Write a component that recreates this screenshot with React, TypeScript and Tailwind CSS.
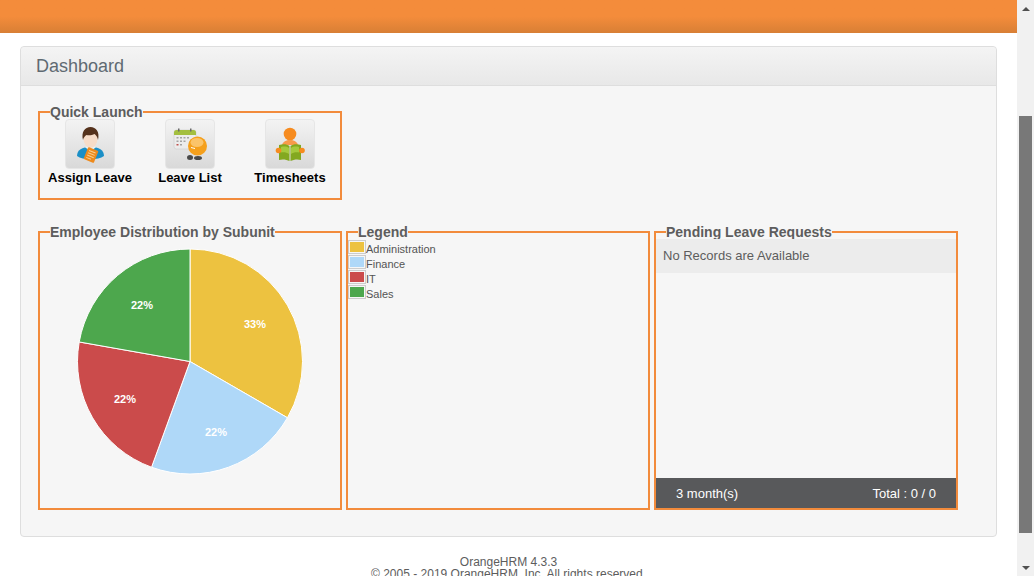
import type { ReactNode } from 'react'

const ORANGE = 'border-[#f28b3c]'

const LEGEND_ITEMS = [
  { label: 'Administration', swatch: 'bg-[#edc240]' },
  { label: 'Finance', swatch: 'bg-[#afd8f8]' },
  { label: 'IT', swatch: 'bg-[#cb4b4b]' },
  { label: 'Sales', swatch: 'bg-[#4da74d]' },
]

// start / end angle clockwise from 12 o'clock
const SLICES = [
  { from: 0, to: 120, color: '#edc240' },
  { from: 120, to: 200, color: '#afd8f8' },
  { from: 200, to: 280, color: '#cb4b4b' },
  { from: 280, to: 360, color: '#4da74d' },
]

const PIE_LABELS = [
  { x: 215, y: 88, text: '33%' },
  { x: 176, y: 196, text: '22%' },
  { x: 85, y: 163, text: '22%' },
  { x: 102, y: 69, text: '22%' },
]

function slicePath(from: number, to: number) {
  const cx = 150
  const cy = 121.5
  const r = 112.5
  const point = (deg: number) => {
    const rad = (deg * Math.PI) / 180
    return `${(cx + r * Math.sin(rad)).toFixed(2)} ${(cy - r * Math.cos(rad)).toFixed(2)}`
  }
  return `M${cx} ${cy} L${point(from)} A${r} ${r} 0 ${to - from > 180 ? 1 : 0} 1 ${point(to)} Z`
}

function Group({
  title,
  className,
  children,
}: {
  title: string
  className: string
  children: ReactNode
}) {
  return (
    <fieldset className={`border-2 ${ORANGE} ${className}`}>
      <legend className="ml-[10px] text-[14px] leading-[16px] font-bold text-[#5d5d5d]">{title}</legend>
      {children}
    </fieldset>
  )
}

function AssignIcon() {
  return (
    <svg width="48" height="48" viewBox="0 0 48 48">
      <path d="M11 36c0-6 5-9 13.500-9S38 30 38 36c-3 2.500-8 3-13.500 3S14 38.500 11 36z" fill="#1b8fc6" />
      <path d="M19 27l5.500 5 5.500-5-5.500-1.500z" fill="#e8f3f8" />
      <ellipse cx="24.500" cy="19" rx="7" ry="9" fill="#f7dcc8" />
      <path d="M17 20c-2-8 2-13 7.500-13S34 12 32 20c-.5-3-2-5-3.500-6-2.500 1.500-6 1.500-8 1-1.500 1-3 2.500-3.500 5z" fill="#55321c" />
      <g transform="rotate(22 25 35)">
        <rect x="19.500" y="28.500" width="11" height="13" rx="1" fill="#ee8a1c" />
        <path d="M21.500 31.500h7M21.500 34h7M21.500 36.500h7M21.500 39h5" stroke="#fbd08f" strokeWidth="1" />
      </g>
    </svg>
  )
}

function LeaveListIcon() {
  return (
    <svg width="48" height="48" viewBox="0 0 48 48">
      <rect x="8" y="10" width="22" height="19" rx="2.500" fill="#ececec" stroke="#c4c4c4" strokeWidth="0.5" />
      <path d="M8 15v-2.500A2.500 2.500 0 0 1 10.500 10h17a2.500 2.500 0 0 1 2.500 2.500V15z" fill="#a3bf3f" />
      <rect x="12" y="8.500" width="1.500" height="3" fill="#6b6b6b" />
      <rect x="24" y="8.500" width="1.500" height="3" fill="#6b6b6b" />
      <path
        d="M10.500 17h2v1.500h-2zM14 17h2v1.500h-2zM17.500 17h2v1.500h-2zM21 17h2v1.500h-2zM10.500 20.500h2V22h-2zM14 20.500h2V22h-2zM17.500 20.500h2V22h-2zM14 24h2v1.500h-2z"
        fill="#a3a3a3"
      />
      <rect x="10.500" y="24" width="2" height="1.500" fill="#c0504d" />
      <ellipse cx="24" cy="37.500" rx="3" ry="2.500" fill="#4a4a4a" />
      <ellipse cx="32" cy="38" rx="4" ry="2" fill="#4a4a4a" />
      <circle cx="31.500" cy="26" r="9.500" fill="#f5a01c" />
      <ellipse cx="31" cy="22.500" rx="6.500" ry="4.500" fill="#fbc46a" />
      <path d="M25 27.500l4 1" stroke="#fff" strokeWidth="1" />
    </svg>
  )
}

function TimesheetsIcon() {
  return (
    <svg width="48" height="48" viewBox="0 0 48 48">
      <circle cx="24" cy="14" r="6.300" fill="#f68b1f" />
      <path d="M16 25c1-3.500 4-5 8-5s7 1.500 8 5z" fill="#f79a4a" />
      <path d="M13 25c4-1.500 8-1 10.500 1v15c-3-1.500-7-2-10.500-1z" fill="#83a820" />
      <path d="M35 25c-4-1.500-8-1-10.500 1v15c3-1.500 7-2 10.500-1z" fill="#83a820" />
      <path d="M15 27c3-.7 6-.5 8 1v6c-2-1.500-5-2-8-1.500zM33 27c-3-.7-6-.5-8 1v6c2-1.500 5-2 8-1.500z" fill="#a5c93d" />
      <circle cx="12.500" cy="30.500" r="2.800" fill="#f68b1f" />
      <circle cx="36" cy="30.500" r="2.800" fill="#f68b1f" />
    </svg>
  )
}

function QuickItem({ label, icon }: { label: string; icon: ReactNode }) {
  return (
    <div className="flex w-[100px] flex-col items-center">
      <div className="flex h-[50px] w-[50px] items-center justify-center rounded-[4px] border border-[#e6e6e6] bg-gradient-to-b from-[#f3f3f3] to-[#d9d9d9]">
        {icon}
      </div>
      <span className="mt-[1px] text-[13px] leading-[16px] font-bold whitespace-nowrap text-black">{label}</span>
    </div>
  )
}

function PieChart() {
  return (
    <svg width="300" height="262" viewBox="0 0 300 262" className="block">
      {SLICES.map((s) => (
        <path key={s.from} d={slicePath(s.from, s.to)} fill={s.color} stroke="#fff" strokeWidth="1" />
      ))}
      {PIE_LABELS.map((l) => (
        <text
          key={`${l.x}-${l.y}`}
          x={l.x}
          y={l.y}
          textAnchor="middle"
          fill="#fff"
          fontSize="11"
          fontWeight="700"
        >
          {l.text}
        </text>
      ))}
    </svg>
  )
}

function Scrollbar() {
  return (
    <div className="flex h-full w-[17px] shrink-0 flex-col items-center bg-[#f1f1f1]">
      <div className="flex h-[17px] w-full items-center justify-center">
        <div className="h-0 w-0 border-x-[4px] border-b-[4px] border-x-transparent border-b-[#505050]" />
      </div>
      <div className="mt-[99px] h-[417px] w-[13px] bg-[#787878]" />
      <div className="mt-auto flex h-[17px] w-full items-center justify-center">
        <div className="h-0 w-0 border-x-[4px] border-t-[4px] border-x-transparent border-t-[#505050]" />
      </div>
    </div>
  )
}

export default function App() {
  return (
    <div className="flex h-[576px] w-[1034px] overflow-hidden bg-white font-['Liberation_Sans',Arial,sans-serif]">
      <div className="w-[1017px] shrink-0">
        <div className="h-[33px] bg-gradient-to-b from-[#f48c3b] from-50% to-[#d87f35]" />

        <div className="mx-[20px] mt-[13px] h-[491px] rounded-[4px] border border-[#dedede] bg-[#f6f6f6]">
          <div className="flex h-[39px] items-center rounded-t-[4px] border-b border-[#dedede] bg-gradient-to-b from-[#f4f4f4] to-[#e8e8e8] pl-[15px]">
            <h1 className="text-[18px] font-normal text-[#5f6a72]">Dashboard</h1>
          </div>

          <div className="pt-[18px] pl-[17px]">
            <Group title="Quick Launch" className="h-[96px] w-[304px]">
              <div className="-mt-[1px] flex">
                <QuickItem label="Assign Leave" icon={<AssignIcon />} />
                <QuickItem label="Leave List" icon={<LeaveListIcon />} />
                <QuickItem label="Timesheets" icon={<TimesheetsIcon />} />
              </div>
            </Group>

            <div className="mt-[24px] flex gap-[4px]">
              <Group title="Employee Distribution by Subunit" className="h-[286px] w-[304px]">
                <PieChart />
              </Group>

              <Group title="Legend" className="h-[286px] w-[304px]">
                <ul>
                  {LEGEND_ITEMS.map((item) => (
                    <li key={item.label} className="flex h-[15px] text-[11px] leading-[19px] text-[#545454]">
                      <span className="h-[14px] w-[18px] border border-[#ccc] p-[1px]">
                        <span className={`block h-[10px] w-[14px] ${item.swatch}`} />
                      </span>
                      {item.label}
                    </li>
                  ))}
                </ul>
              </Group>

              <Group title="Pending Leave Requests" className="h-[286px] w-[304px]">
                <div className="-mt-[1px] flex h-[269px] flex-col">
                  <div className="flex h-[34px] items-center bg-[#ececec] pl-[7px] text-[13px] text-[#5d5d5d]">
                    No Records are Available
                  </div>
                  <div className="mt-auto flex h-[30px] items-center justify-between bg-[#58595b] px-[20px] pt-[2px] text-[13px] text-white">
                    <span>3 month(s)</span>
                    <span>Total : 0 / 0</span>
                  </div>
                </div>
              </Group>
            </div>
          </div>
        </div>

        <div className="mt-[19px] text-center text-[12px] leading-[12px] text-[#5d5d5d]">
          <p>OrangeHRM 4.3.3</p>
          <p>© 2005 - 2019 OrangeHRM, Inc. All rights reserved.</p>
        </div>
      </div>
      <Scrollbar />
    </div>
  )
}
